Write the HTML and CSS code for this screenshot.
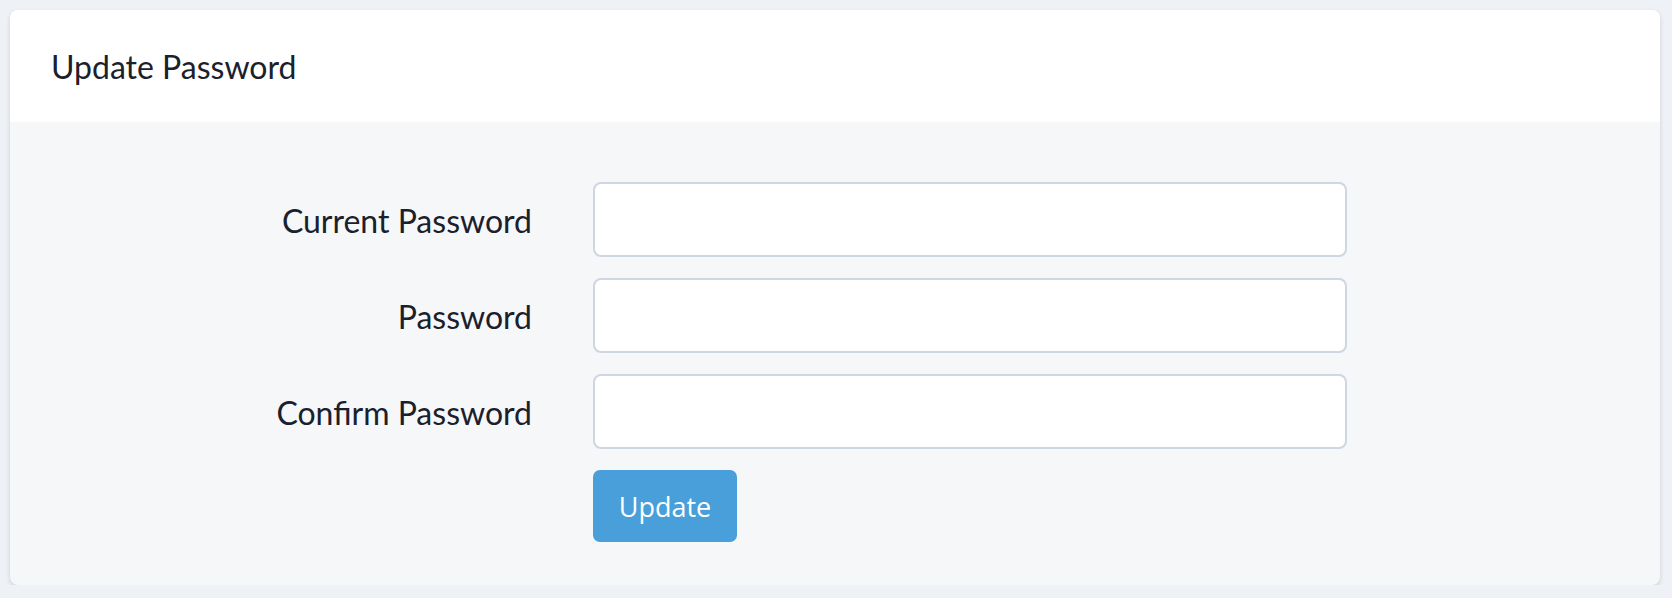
FILE: index.html
```html
<!DOCTYPE html>
<html>
<head>
<meta charset="utf-8">
<link rel="stylesheet" href="styles.css">
</head>
<body>
<div class="card">
  <div class="card-header">Update Password</div>
  <form class="card-body">
    <label class="label" for="current">Current Password</label>
    <input class="input" id="current" type="password">
    <label class="label" for="password">Password</label>
    <input class="input" id="password" type="password">
    <label class="label" for="confirm">Confirm Password</label>
    <input class="input" id="confirm" type="password">
    <div class="actions">
      <button class="btn" type="button">Update</button>
    </div>
  </form>
</div>
</body>
</html>
```
FILE: styles.css
```css
html, body {
  margin: 0;
  padding: 0;
  background: #eef1f5;
}
body {
  padding: 10px 12px 0 10px;
  font-family: Lato, "Open Sans", sans-serif;
  color: #1a202c;
}
.card {
  background: #f5f7f9;
  border-radius: 8px;
  box-shadow: 0 2px 5px rgba(0, 0, 0, 0.14);
  overflow: hidden;
}
.card-header {
  background: #ffffff;
  height: 112px;
  display: flex;
  align-items: center;
  padding-left: 41px;
  font-size: 32px;
  box-sizing: border-box;
  padding-top: 1px;
}
.card-body {
  display: grid;
  grid-template-columns: 522px 754px;
  column-gap: 61px;
  row-gap: 21px;
  grid-auto-rows: 75px;
  padding: 60px 0 40px 0;
  margin: 0;
}
.label {
  display: flex;
  align-items: center;
  justify-content: flex-end;
  font-size: 32px;
  padding-top: 1px;
}
.input {
  box-sizing: border-box;
  width: 100%;
  height: 75px;
  margin: 0;
  background: #ffffff;
  border: 2px solid #cdd6e1;
  border-radius: 8px;
  font-size: 28px;
  padding: 0 20px;
  outline: none;
}
.actions {
  grid-column: 2;
  height: 72px;
}
.btn {
  height: 72px;
  width: 144px;
  background: #489fd9;
  color: #ffffff;
  border: none;
  border-radius: 7px;
  font-family: "Open Sans", sans-serif;
  font-weight: 500;
  font-size: 27px;
  padding: 0;
  cursor: pointer;
}
```
